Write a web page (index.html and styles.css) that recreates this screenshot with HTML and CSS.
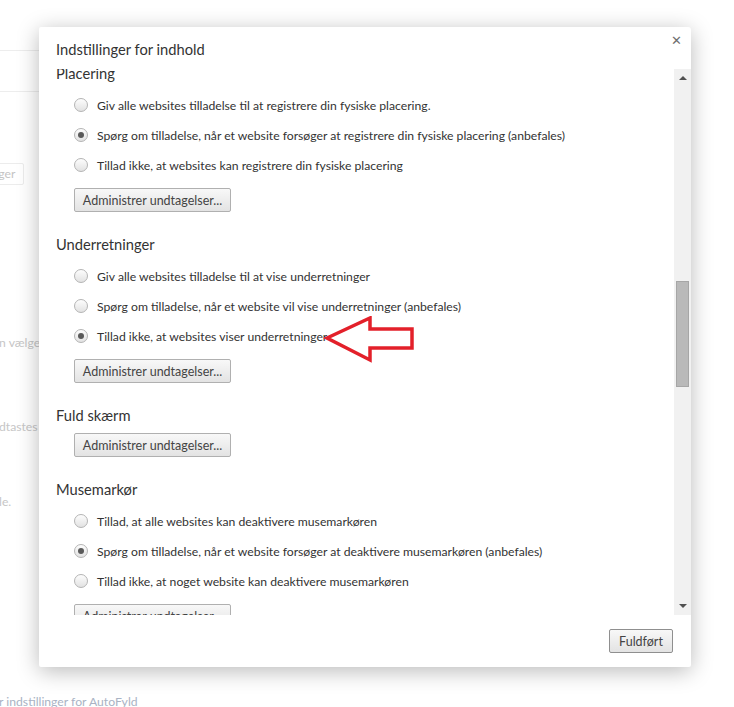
FILE: index.html
```html
<!DOCTYPE html>
<html lang="da">
<head>
  <meta charset="UTF-8">
  <meta name="viewport" content="width=device-width, initial-scale=1.0">
  <title>Indstillinger for indhold</title>
  <link rel="stylesheet" href="styles.css">
</head>
<body>
  <div class="page">
    <div class="page-top"></div>
    <div class="page-bar"></div>
    <div class="page-btn">Indstillinger</div>
    <div class="page-text t1">n vælge</div>
    <div class="page-text t2">dtastes i</div>
    <div class="page-text t3">le.</div>
    <div class="page-link">r indstillinger for AutoFyld</div>
  </div>

  <div class="dialog">
    <div class="dialog-head">
      <div class="dialog-title">Indstillinger for indhold</div>
      <div class="close">&#x2715;</div>
    </div>

    <div class="dialog-body">
      <div class="content">
        <div class="section first">
          <div class="heading">Placering</div>
          <div class="options">
            <div class="option"><span class="radio"></span>Giv alle websites tilladelse til at registrere din fysiske placering.</div>
            <div class="option"><span class="radio checked"></span>Spørg om tilladelse, når et website forsøger at registrere din fysiske placering (anbefales)</div>
            <div class="option"><span class="radio"></span>Tillad ikke, at websites kan registrere din fysiske placering</div>
          </div>
          <button class="btn">Administrer undtagelser...</button>
        </div>

        <div class="section">
          <div class="heading">Underretninger</div>
          <div class="options">
            <div class="option"><span class="radio"></span>Giv alle websites tilladelse til at vise underretninger</div>
            <div class="option"><span class="radio"></span>Spørg om tilladelse, når et website vil vise underretninger (anbefales)</div>
            <div class="option"><span class="radio checked"></span>Tillad ikke, at websites viser underretninger</div>
          </div>
          <button class="btn">Administrer undtagelser...</button>
        </div>

        <div class="section">
          <div class="heading">Fuld skærm</div>
          <button class="btn">Administrer undtagelser...</button>
        </div>

        <div class="section">
          <div class="heading">Musemarkør</div>
          <div class="options">
            <div class="option"><span class="radio"></span>Tillad, at alle websites kan deaktivere musemarkøren</div>
            <div class="option"><span class="radio checked"></span>Spørg om tilladelse, når et website forsøger at deaktivere musemarkøren (anbefales)</div>
            <div class="option"><span class="radio"></span>Tillad ikke, at noget website kan deaktivere musemarkøren</div>
          </div>
          <button class="btn">Administrer undtagelser...</button>
        </div>
      </div>

      <div class="scrollbar">
        <div class="arrow-up"></div>
        <div class="track">
          <div class="thumb"></div>
        </div>
        <div class="arrow-down"></div>
      </div>
    </div>

    <div class="dialog-foot">
      <button class="btn done">Fuldført</button>
    </div>
  </div>

  <svg class="pointer" width="100" height="56" viewBox="0 0 100 56">
    <polygon points="6,22 49,2 49,13 91,13 91,32 49,32 49,44" fill="none" stroke="#e3202a" stroke-width="3.5" stroke-linejoin="miter"/>
  </svg>
</body>
</html>
```

FILE: styles.css
```css
body {
  margin: 0;
  background: #fff;
  font-family: Lato, "Open Sans", sans-serif;
  font-size: 12.2px;
  color: #333;
  overflow: hidden;
}
.page {
  width: 734px;
  height: 707px;
}
.page-top {
  width: 660px;
  height: 50px;
  border-bottom: 1px solid #ededed;
}
.page-bar {
  width: 660px;
  height: 40px;
  border-bottom: 1px solid #ededed;
}
.page-btn {
  margin-top: 71px;
  margin-left: -58px;
  width: 60px;
  height: 20px;
  line-height: 20px;
  padding: 0 10px;
  border: 1px solid #ececec;
  border-radius: 2px;
  color: #c4c4c4;
  text-align: right;
  white-space: nowrap;
  overflow: hidden;
}
.page-text,
.page-link {
  height: 18px;
  line-height: 18px;
  color: #c6c6c6;
  white-space: nowrap;
  margin-left: -1px;
}
.t1 { margin-top: 149px; }
.t2 { margin-top: 66px; }
.t3 { margin-top: 57px; }
.page-link {
  margin-top: 182px;
  color: #a9b3c4;
}

.dialog {
  position: absolute;
  left: 39px;
  top: 27px;
  width: 652px;
  height: 640px;
  background: #fff;
  border-radius: 2px 3px 2px 2px;
  box-shadow: 0 4px 22px rgba(0, 0, 0, 0.28);
  display: flex;
  flex-direction: column;
}
.dialog-head {
  height: 42px;
  display: flex;
  justify-content: space-between;
  padding: 0 9px 0 17px;
}
.dialog-title {
  margin-top: 12px;
  font-size: 14.7px;
  line-height: 20px;
  color: #333;
}
.close {
  margin-top: 6px;
  font-size: 13px;
  font-weight: bold;
  color: #6f6f6f;
  font-family: "DejaVu Sans", sans-serif;
}
.dialog-body {
  height: 546px;
  display: flex;
}
.content {
  flex: 1;
  overflow: hidden;
  padding-left: 17px;
}
.section {
  margin-top: 22px;
}
.section.first {
  margin-top: -6px;
}
.heading {
  font-size: 14.7px;
  line-height: 20px;
  color: #333;
}
.options {
  margin-top: 7px;
  padding-left: 18px;
}
.option {
  height: 30px;
  display: flex;
  align-items: center;
  white-space: nowrap;
}
.radio {
  width: 12px;
  height: 12px;
  border-radius: 50%;
  border: 1px solid #b4b4b4;
  background: linear-gradient(#fdfdfd, #e2e2e2);
  margin-right: 9px;
  display: flex;
  align-items: center;
  justify-content: center;
  flex-shrink: 0;
}
.radio.checked::after {
  content: "";
  width: 6px;
  height: 6px;
  border-radius: 50%;
  background: #5a5a5a;
}
.btn {
  display: block;
  width: 157px;
  height: 24px;
  padding: 0;
  margin-top: 8px;
  margin-left: 18px;
  border: 1px solid #b0b0b0;
  border-radius: 2px;
  background: linear-gradient(#f8f8f8, #e3e3e3);
  font-family: inherit;
  font-size: 12.5px;
  color: #444;
  white-space: nowrap;
}
.scrollbar {
  width: 17px;
  background: #f1f1f1;
  display: flex;
  flex-direction: column;
  align-items: center;
}
.arrow-up {
  margin-top: 7px;
  width: 0;
  height: 0;
  border-left: 4px solid transparent;
  border-right: 4px solid transparent;
  border-bottom: 4px solid #505050;
}
.track {
  flex: 1;
  width: 100%;
}
.thumb {
  margin: 201px auto 0;
  width: 11px;
  height: 104px;
  background: #b9b9b9;
  border: 1px solid #a6a6a6;
}
.arrow-down {
  margin-bottom: 7px;
  width: 0;
  height: 0;
  border-left: 4px solid transparent;
  border-right: 4px solid transparent;
  border-top: 4px solid #505050;
}
.dialog-foot {
  flex: 1;
  display: flex;
  justify-content: flex-end;
  align-items: flex-start;
  padding: 14px 18px 0 0;
}
.btn.done {
  margin: 0;
  width: 64px;
  border-color: #8f8f8f;
}
.pointer {
  position: absolute;
  left: 321px;
  top: 316px;
}
```
